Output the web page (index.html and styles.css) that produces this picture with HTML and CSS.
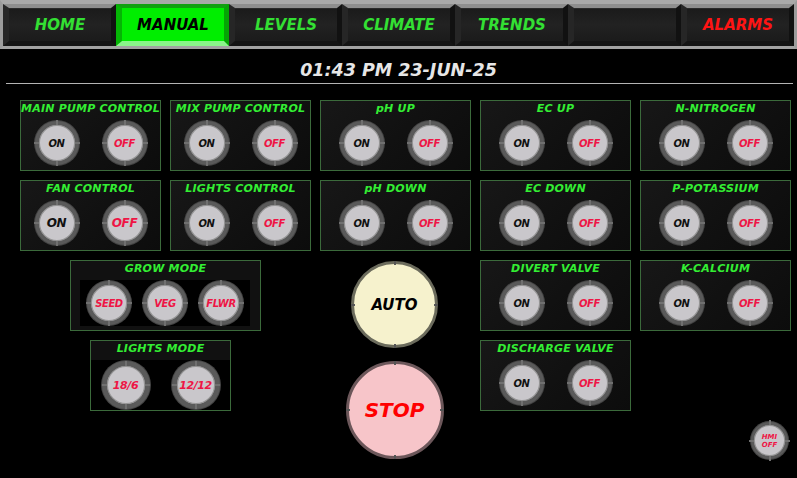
FILE: index.html
```html
<!DOCTYPE html>
<html>
<head>
<meta charset="utf-8">
<link rel="stylesheet" href="styles.css">
</head>
<body>
<div class="screen">
  <nav class="nav">
    <div class="tab">HOME</div>
    <div class="tab active">MANUAL</div>
    <div class="tab">LEVELS</div>
    <div class="tab">CLIMATE</div>
    <div class="tab">TRENDS</div>
    <div class="tab"></div>
    <div class="tab alarm">ALARMS</div>
  </nav>
  <div class="clock">01:43 PM 23-JUN-25</div>
  <div class="rule"></div>

  <main class="grid">
    <section class="panel"><div class="title">MAIN PUMP CONTROL</div><div class="pair"><div class="btn on">ON</div><div class="btn off">OFF</div></div></section>
    <section class="panel"><div class="title">MIX PUMP CONTROL</div><div class="pair"><div class="btn on">ON</div><div class="btn off">OFF</div></div></section>
    <section class="panel"><div class="title">pH UP</div><div class="pair"><div class="btn on">ON</div><div class="btn off">OFF</div></div></section>
    <section class="panel"><div class="title">EC UP</div><div class="pair"><div class="btn on">ON</div><div class="btn off">OFF</div></div></section>
    <section class="panel"><div class="title">N-NITROGEN</div><div class="pair"><div class="btn on">ON</div><div class="btn off">OFF</div></div></section>

    <section class="panel"><div class="title">FAN CONTROL</div><div class="pair"><div class="btn on big">ON</div><div class="btn off big">OFF</div></div></section>
    <section class="panel"><div class="title">LIGHTS CONTROL</div><div class="pair"><div class="btn on">ON</div><div class="btn off">OFF</div></div></section>
    <section class="panel"><div class="title">pH DOWN</div><div class="pair"><div class="btn on">ON</div><div class="btn off">OFF</div></div></section>
    <section class="panel"><div class="title">EC DOWN</div><div class="pair"><div class="btn on">ON</div><div class="btn off">OFF</div></div></section>
    <section class="panel"><div class="title">P-POTASSIUM</div><div class="pair"><div class="btn on">ON</div><div class="btn off">OFF</div></div></section>

    <section class="panel grow">
      <div class="title">GROW MODE</div>
      <div class="grow-inner"><div class="btn off">SEED</div><div class="btn off">VEG</div><div class="btn off">FLWR</div></div>
    </section>
    <div class="master">
      <div class="big-btn auto">AUTO</div>
      <div class="big-btn stop">STOP</div>
    </div>
    <section class="panel c4r3"><div class="title">DIVERT VALVE</div><div class="pair"><div class="btn on">ON</div><div class="btn off">OFF</div></div></section>
    <section class="panel c5r3"><div class="title">K-CALCIUM</div><div class="pair"><div class="btn on">ON</div><div class="btn off">OFF</div></div></section>

    <section class="panel lights">
      <div class="title lights-head">LIGHTS MODE</div>
      <div class="lights-body"><div class="btn off lbtn">18/6</div><div class="btn off lbtn">12/12</div></div>
    </section>
    <section class="panel c4r4"><div class="title">DISCHARGE VALVE</div><div class="pair"><div class="btn on">ON</div><div class="btn off">OFF</div></div></section>

    <div class="btn off hmi">HMI<br>OFF</div>
  </main>
</div>
</body>
</html>
```

FILE: styles.css
```css
html, body {
  margin: 0;
  padding: 0;
  background: #000;
}
.screen {
  width: 797px;
  height: 478px;
  overflow: hidden;
  background: #000;
  font-family: "DejaVu Sans", "Liberation Sans", sans-serif;
  font-weight: bold;
  font-style: italic;
}

/* NAV */
.nav {
  display: flex;
  height: 49px;
  box-sizing: border-box;
  border-top: 4px solid #a9a9a9;
  border-left: 3px solid #9c9c9c;
  border-right: 3px solid #9c9c9c;
  border-bottom: 3px solid #a2a2a2;
  background: #000;
}
.tab {
  width: 113px;
  flex: none;
  box-sizing: border-box;
  border-top: 4px solid #8e8e8e;
  border-left: 6px solid #262626;
  border-right: 5px solid #111;
  border-bottom: 5px solid #141414;
  background: linear-gradient(180deg, #1a1a1a 0%, #222 50%, #1b1b1b 100%);
  color: #33e033;
  font-size: 15px;
  padding-top: 1px;
  display: flex;
  align-items: center;
  justify-content: center;
  box-shadow: inset 0 1px 0 #2a2a2a;
}
.tab.active {
  background: #00ee00;
  border-top-color: #11a011;
  border-left-color: #05b505;
  border-right-color: #05a505;
  border-bottom-color: #8af58a;
  color: #000;
  box-shadow: none;
}
.tab.alarm { color: #ff1414; }

/* CLOCK */
.clock {
  height: 34px;
  box-sizing: border-box;
  padding-top: 11px;
  line-height: 20px;
  font-size: 17.5px;
  color: #e6e6e6;
  text-align: center;
}
.rule {
  height: 1px;
  margin: 0 4px 0 6px;
  background: #b4b4b4;
}

/* GRID */
.grid {
  display: grid;
  grid-template-columns: 141px 141px 151px 151px 151px;
  grid-template-rows: repeat(4, 71px) auto;
  column-gap: 9px;
  row-gap: 9px;
  margin: 16px 0 0 20px;
}
.panel {
  box-sizing: border-box;
  border: 1px solid #3b6a3b;
  background: linear-gradient(135deg, #171717 0%, #101010 60%, #0c0c0c 100%);
  display: flex;
  flex-direction: column;
}
.title {
  color: #33ee33;
  font-size: 11px;
  line-height: 15px;
  text-align: center;
  white-space: nowrap;
  letter-spacing: 0.2px;
}
.pair {
  display: flex;
  justify-content: center;
  gap: 24px;
  margin-top: 5px;
}

/* ROUND BUTTONS */
.btn {
  position: relative;
  width: 44px;
  height: 44px;
  flex: none;
  box-sizing: border-box;
  border-radius: 50%;
  border: 4px solid #5a5a5a;
  background: #c9c7cb;
  box-shadow: inset 0 0 0 1px #959595, 0 0 0 1px #444;
  display: flex;
  align-items: center;
  justify-content: center;
  font-size: 10px;
  letter-spacing: -0.4px;
}
.btn::after {
  content: "";
  position: absolute;
  inset: -5px;
  background:
    linear-gradient(#707070, #707070) top center / 2px 5px no-repeat,
    linear-gradient(#707070, #707070) bottom center / 2px 5px no-repeat,
    linear-gradient(#707070, #707070) left center / 5px 2px no-repeat,
    linear-gradient(#707070, #707070) right center / 5px 2px no-repeat;
}
.btn.on { color: #111; }
.btn.off { color: #ee1545; }
.btn.big { font-size: 12px; }

/* GROW MODE */
.grow {
  grid-column: 1 / 3;
  grid-row: 3;
  justify-self: start;
  width: 191px;
  margin-left: 50px;
  background: #111;
}
.grow-inner {
  margin: 4px 10px 0 9px;
  height: 46px;
  background: #000;
  display: flex;
  align-items: center;
  justify-content: center;
  gap: 12px;
}

/* LIGHTS MODE */
.lights {
  grid-column: 1 / 3;
  grid-row: 4;
  justify-self: start;
  width: 141px;
  margin-left: 70px;
  background: #000;
}
.lights-head {
  background: #111;
  height: 19px;
  line-height: 16px;
}
.lights-body {
  display: flex;
  justify-content: center;
  gap: 22px;
  margin-top: 1px;
}
.btn.lbtn {
  width: 48px;
  height: 48px;
  border-width: 5px;
  font-size: 11px;
}

/* MASTER */
.master {
  grid-column: 3;
  grid-row: 3 / 5;
  display: flex;
  flex-direction: column;
  align-items: center;
  padding-right: 2px;
}
.big-btn {
  position: relative;
  box-sizing: border-box;
  border-radius: 50%;
  display: flex;
  align-items: center;
  justify-content: center;
  flex: none;
}
.big-btn::after {
  content: "";
  position: absolute;
  inset: -3px;
  background:
    linear-gradient(#555, #555) top center / 2px 4px no-repeat,
    linear-gradient(#555, #555) bottom center / 2px 4px no-repeat,
    linear-gradient(#555, #555) left center / 4px 2px no-repeat,
    linear-gradient(#555, #555) right center / 4px 2px no-repeat;
}
.auto {
  width: 87px;
  height: 87px;
  margin-top: 1px;
  border: 3px solid #6b6b5c;
  background: #f6f2cd;
  color: #000;
  font-size: 15px;
}
.stop {
  width: 98px;
  height: 98px;
  margin-top: 13px;
  border: 3px solid #6c575a;
  background: #f7c5c9;
  color: #ff0000;
  font-size: 20px;
}

.c4r3 { grid-column: 4; grid-row: 3; }
.c5r3 { grid-column: 5; grid-row: 3; }
.c4r4 { grid-column: 4; grid-row: 4; }

/* HMI */
.btn.hmi {
  grid-column: 5;
  grid-row: 5;
  justify-self: end;
  margin: 2px 3px 0 0;
  width: 37px;
  height: 37px;
  border-width: 3px;
  font-size: 7px;
  line-height: 8px;
  letter-spacing: 0;
  text-align: center;
}
```
